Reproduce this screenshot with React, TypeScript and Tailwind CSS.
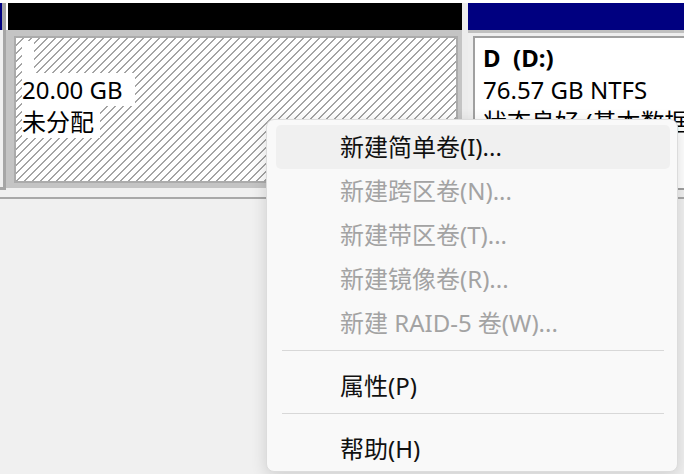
import React from 'react';

type MenuItem = { label: string; disabled?: boolean; hover?: boolean } | 'sep';

const menuItems: MenuItem[] = [
  { label: '新建简单卷(I)...', hover: true },
  { label: '新建跨区卷(N)...', disabled: true },
  { label: '新建带区卷(T)...', disabled: true },
  { label: '新建镜像卷(R)...', disabled: true },
  { label: '新建 RAID-5 卷(W)...', disabled: true },
  'sep',
  { label: '属性(P)' },
  'sep',
  { label: '帮助(H)' },
];

function ContextMenu() {
  return (
    <div className="absolute left-[266px] top-[119px] w-[412px] h-[353px] rounded-[8px] border border-[#dcdcdc] bg-[#f9f9f9] shadow-[0_4px_16px_rgba(0,0,0,0.14)] pt-[5px] pl-[9px] pr-[7px]">
      {menuItems.map((item, i) =>
        item === 'sep' ? (
          <div key={i} className="h-[19px] pt-[5px] px-[6px]">
            <div className="h-px bg-[#d8d8d8]" />
          </div>
        ) : (
          <div
            key={i}
            className={`h-[44px] flex items-center pl-[64px] rounded-[5px] text-[24px] leading-none whitespace-pre ${
              item.hover ? 'bg-[#f0f0f0]' : ''
            } ${item.disabled ? 'text-[#a3a3a3]' : 'text-[#111]'}`}
          >
            {item.label}
          </div>
        )
      )}
    </div>
  );
}

export default function App() {
  return (
    <div className="relative w-[684px] h-[474px] overflow-hidden bg-[#f0f0f0] font-['Noto_Sans','Noto_Sans_CJK_SC',sans-serif] text-black">
      {/* disk row */}
      <div className="flex h-[190px] border-t-[3px] border-white">
        {/* left edge (previous column) */}
        <div className="w-[6px] shrink-0 flex flex-col">
          <div className="h-[27px] flex">
            <div className="w-[2px] bg-[#000080]" />
            <div className="w-[4px] bg-[#a6a6a6]" />
          </div>
          <div className="flex-1 flex">
            <div className="w-[3px] bg-[#f0f0f0]" />
            <div className="w-[3px] bg-[#a6a6a6]" />
          </div>
          <div className="h-[3px] bg-[#a6a6a6]" />
        </div>

        {/* unallocated segment */}
        <div className="w-[456px] shrink-0 flex flex-col">
          <div className="h-[27px] pl-[2px] bg-white">
            <div className="h-full bg-black" />
          </div>
          <div className="h-[158px] bg-[#c4c4c4] pt-[6px] pl-[8px] pr-[4px] pb-[5px]">
            <div className="h-full border-2 border-[#ababab] bg-[repeating-linear-gradient(135deg,#ffffff_0,#ffffff_4.5px,#a4a4a4_4.5px,#a4a4a4_5.66px)] pt-[4px] pl-[6px] text-[24px] leading-[32px]">
              <div>
                <span className="bg-white whitespace-pre">{'  '}</span>
              </div>
              <div>
                <span className="bg-white whitespace-pre">{'20.00 GB  '}</span>
              </div>
              <div>
                <span className="bg-white whitespace-pre">{'未分配 '}</span>
              </div>
            </div>
          </div>
        </div>

        {/* gap between segments */}
        <div className="w-[6px] shrink-0 bg-[#ececec]" />

        {/* D: segment */}
        <div className="flex-1 min-w-0 flex flex-col">
          <div className="h-[27px] bg-[#000080]" />
          <div className="flex-1 border-t-[3px] border-[#c0c0c0] bg-[#eeeeee] pl-[5px] pt-[3px]">
            <div className="h-full border-2 border-r-0 border-[#a0a0a0] bg-white pt-[4px] pl-[8px] text-[24px] leading-[32px] whitespace-pre overflow-hidden">
              <div className="font-bold">{'D  (D:)'}</div>
              <div>76.57 GB NTFS</div>
              <div>状态良好 (基本数据分区)</div>
            </div>
          </div>
        </div>
      </div>

      {/* lower separator line */}
      <div className="mt-[7px] h-[2px] bg-[#a8a8a8]" />

      <ContextMenu />
    </div>
  );
}
